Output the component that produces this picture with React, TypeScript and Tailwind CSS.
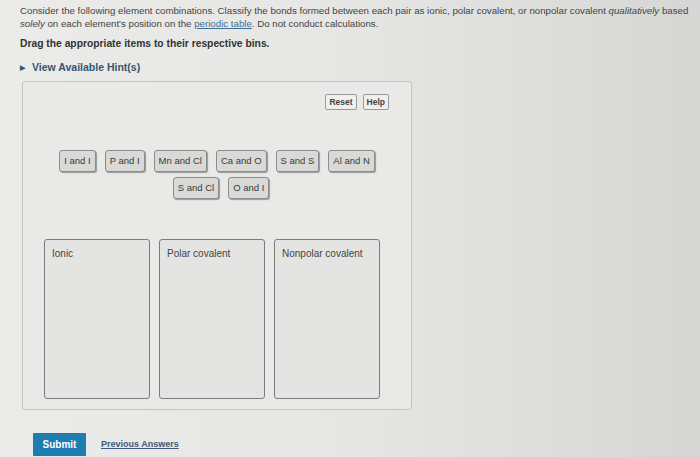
const items1 = ['I and I', 'P and I', 'Mn and Cl', 'Ca and O', 'S and S', 'Al and N']
const items2 = ['S and Cl', 'O and I']
const bins = ['Ionic', 'Polar covalent', 'Nonpolar covalent']

function Item({ label }: { label: string }) {
    return (
        <div className="h-[22px] px-[4px] flex items-center rounded-[3px] border border-[#8c8c8c] bg-[#d9d9d7] text-[9.5px] text-[#3a3a3a] shadow-[1px_1px_1px_rgba(0,0,0,0.35)]">
            {label}
        </div>
    )
}

export default function App() {
    return (
        <div className="w-[700px] h-[457px] overflow-hidden bg-gradient-to-r from-[#ebebe9] via-[#e6e6e4] to-[#d6d6d4] font-['Liberation_Sans',Arial,sans-serif] text-[#333]">
            <div className="pl-[20px] pt-[4px] pr-[4px] text-[9.7px] leading-[13px] text-[#444] whitespace-nowrap">
                <p>
                    Consider the following element combinations. Classify the bonds formed between each pair as ionic, polar covalent, or nonpolar covalent <i>qualitatively</i> based
                    <br />
                    <i>solely</i> on each element's position on the <span className="text-[#3f6f95] underline">periodic table</span>. Do not conduct calculations.
                </p>
                <p className="mt-[7px] font-bold text-[#333] text-[10.3px]">Drag the appropriate items to their respective bins.</p>
                <div className="mt-[11px] flex items-center gap-[7px] font-bold text-[#36566f] text-[10.5px]">
                    <span className="text-[7px]">▶</span>
                    <span>View Available Hint(s)</span>
                </div>
            </div>

            <div className="ml-[22px] mt-[7px] w-[390px] h-[329px] rounded-[3px] border border-[#c4c4c2] bg-[#e9e9e7] flex flex-col">
                <div className="flex justify-end gap-[6px] pt-[12px] pr-[22px]">
                    <div className="h-[16px] px-[3px] flex items-center border border-[#9a9a9a] rounded-[2px] bg-[#efefed] text-[8.5px] font-bold text-[#444]">Reset</div>
                    <div className="h-[16px] px-[3px] flex items-center border border-[#9a9a9a] rounded-[2px] bg-[#efefed] text-[8.5px] font-bold text-[#444]">Help</div>
                </div>
                <div className="mt-[40px] flex justify-center gap-[9px]">
                    {items1.map((i) => <Item key={i} label={i} />)}
                </div>
                <div className="mt-[5px] flex justify-center gap-[9px] pl-[8px]">
                    {items2.map((i) => <Item key={i} label={i} />)}
                </div>
                <div className="mt-[40px] flex gap-[9px] pl-[21px]">
                    {bins.map((b) => (
                        <div key={b} className="w-[106px] h-[160px] rounded-[3px] border border-[#7c7c7c] bg-[#e4e4e2] px-[7px] py-[6px] text-[10px] text-[#444]">
                            {b}
                        </div>
                    ))}
                </div>
            </div>

            <div className="ml-[33px] mt-[23px] flex items-center gap-[15px]">
                <div className="w-[53px] h-[23px] flex items-center justify-center bg-[#1d7db0] text-white text-[10px] font-bold rounded-[1px]">Submit</div>
                <span className="text-[9px] font-bold text-[#3d5a78] underline">Previous Answers</span>
            </div>
        </div>
    )
}
